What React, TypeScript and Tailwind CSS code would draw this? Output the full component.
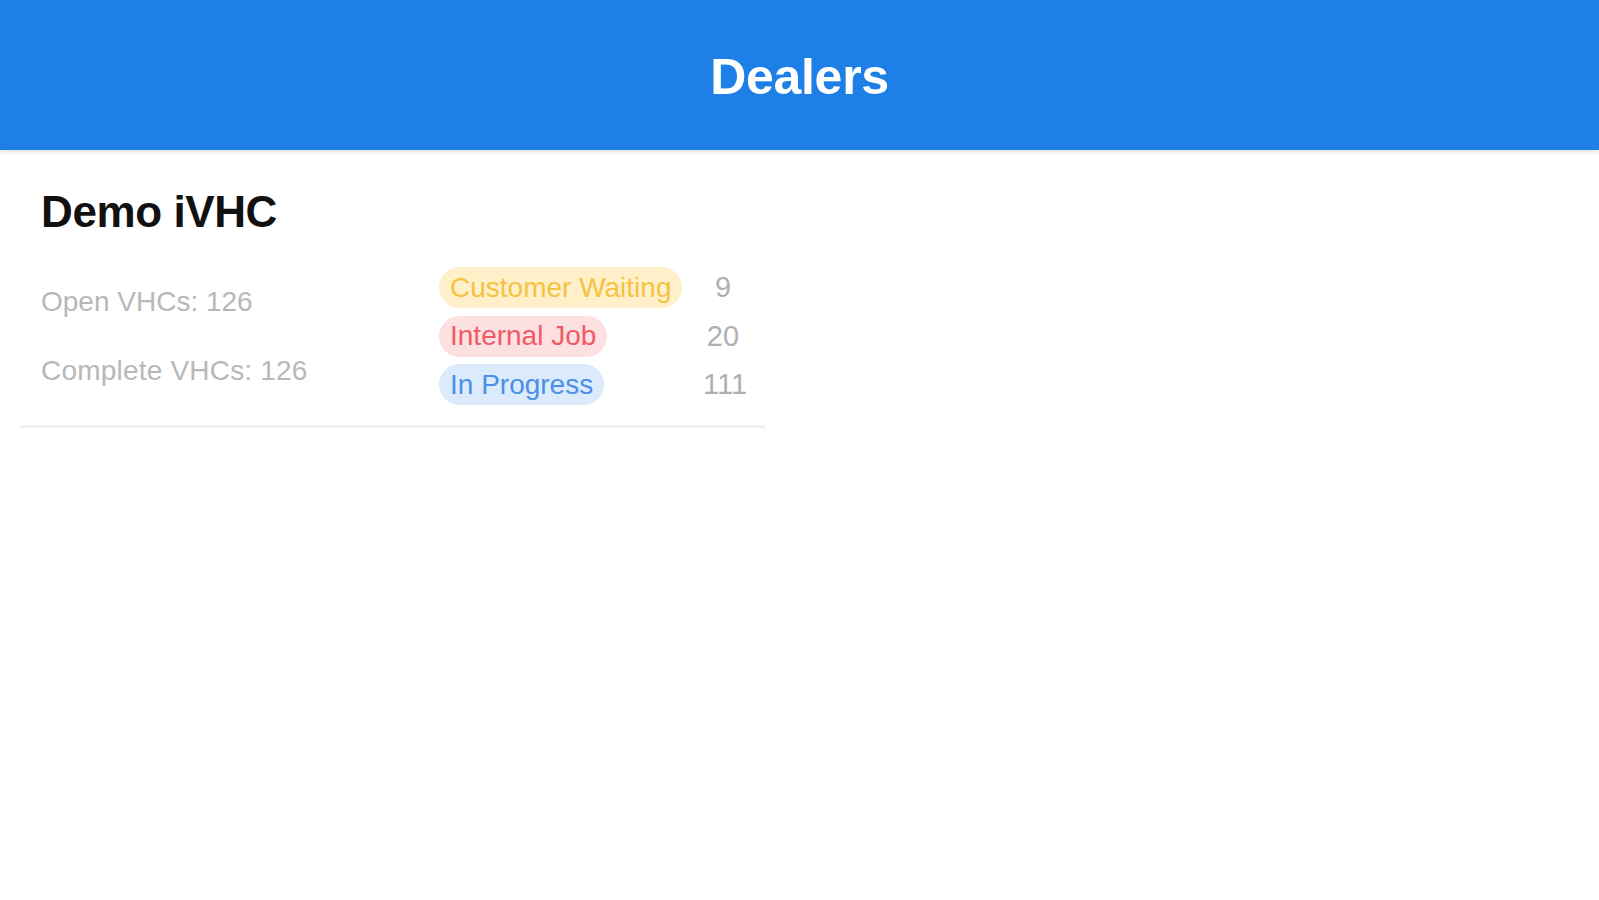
import React from 'react';

interface StatusItem {
  label: string;
  count: number;
  pill: string;
}

const statuses: StatusItem[] = [
  { label: 'Customer Waiting', count: 9, pill: 'bg-[#fff0c9] text-[#f6c244]' },
  { label: 'Internal Job', count: 20, pill: 'bg-[#fde0e2] text-[#ef5a66]' },
  { label: 'In Progress', count: 111, pill: 'bg-[#dcebfc] text-[#4a90e6]' },
];

const App: React.FC = () => {
  return (
    <div className="min-h-screen bg-white" style={{ fontFamily: '"Liberation Sans", Arial, sans-serif' }}>
      <header className="h-[150px] bg-[#1e80e6] flex items-center justify-center shadow-[0_2px_4px_rgba(0,0,0,0.12)]">
        <h1 className="text-white text-[50px] font-bold leading-none tracking-[-0.3px] mt-[4px]">Dealers</h1>
      </header>

      <div className="w-[745px] ml-[20px] pt-[40px] pb-[20px] pl-[21px] pr-[22px] border-b-[3px] border-[#f0f0f0]">
        <h2 className="text-[44px] font-bold leading-none text-[#111] tracking-[-0.4px]">Demo iVHC</h2>

        <div className="flex mt-[33px]">
          <div className="w-[398px] flex flex-col justify-center gap-[35px] text-[28px] leading-[34px] text-[#b8b8b8]">
            <span>Open VHCs: 126</span>
            <span className="tracking-[0.2px]">Complete VHCs: 126</span>
          </div>

          <div className="flex-1 flex flex-col gap-[7.5px]">
            {statuses.map((s) => (
              <div key={s.label} className="flex items-center justify-between">
                <span className={`h-[41px] px-[11px] rounded-full flex items-center text-[28px] leading-none ${s.pill}`}>
                  {s.label}
                </span>
                <span className="w-[40px] text-center text-[29px] leading-none text-[#b0b0b0]">{s.count}</span>
              </div>
            ))}
          </div>
        </div>
      </div>
    </div>
  );
};

export default App;
